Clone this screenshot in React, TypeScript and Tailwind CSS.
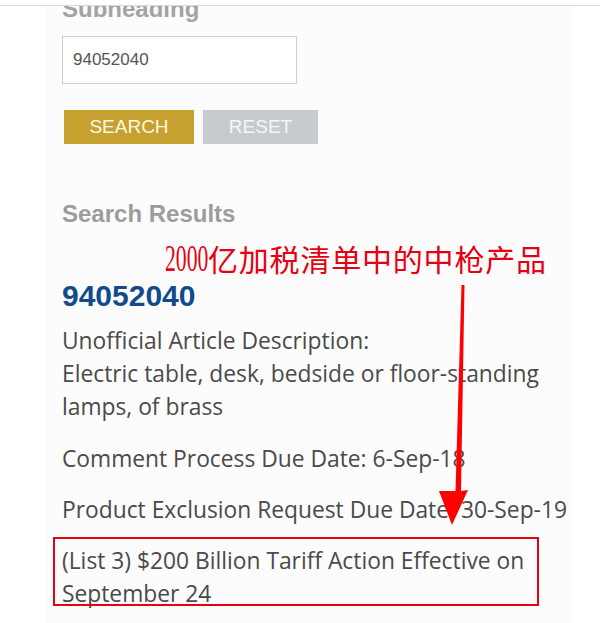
import React from "react";

export default function App() {
  const body = "font-['Open_Sans',sans-serif] text-[22.8px] leading-[33px] text-[#4a4a4a]";
  return (
    <div className="relative w-[600px] h-[623px] overflow-hidden bg-white">
      <div className="h-[6px] border-b border-[#dadada] bg-white" />
      <div className="ml-[46px] w-[528px] h-[617px] overflow-hidden bg-[#fcfcfc] pl-[16px]">
        <h2 className="mt-[-9px] text-[24px] leading-[24px] font-bold text-[#a3a3a3] font-['Liberation_Sans',Arial,sans-serif]">
          Subheading
        </h2>
        <div className="mt-[15px] w-[235px] h-[48px] border border-[#cfcfcf] bg-white flex items-center pl-[10px] font-['Liberation_Sans',Arial,sans-serif] text-[17px] text-[#555]">
          94052040
        </div>
        <div className="mt-[26px] ml-[2px] flex gap-[9px] font-['Liberation_Sans',Arial,sans-serif] text-[19px]">
          <div className="w-[130px] h-[34px] bg-[#c6a130] text-[#fff8e0] flex items-center justify-center">
            SEARCH
          </div>
          <div className="w-[115px] h-[34px] bg-[#c6cbd0] text-[#f4f6f8] flex items-center justify-center">
            RESET
          </div>
        </div>
        <h3 className="mt-[56px] text-[24px] leading-[28px] font-bold text-[#9c9c9c] font-['Liberation_Sans',Arial,sans-serif]">
          Search Results
        </h3>
        <div className="mt-[51px] text-[30px] leading-[34px] font-bold text-[#124b8d] font-['Liberation_Sans',Arial,sans-serif]">
          94052040
        </div>
        <p className={`mt-[11px] w-[490px] ${body}`}>
          Unofficial Article Description:
          <br />
          Electric table, desk, bedside or floor-standing lamps, of brass
        </p>
        <p className={`mt-[19px] ${body}`}>Comment Process Due Date: 6-Sep-18</p>
        <p className={`mt-[18px] whitespace-nowrap ${body}`}>Product Exclusion Request Due Date: 30-Sep-19</p>
        <div className="relative mt-[18px]">
          <p className={`w-[470px] ${body}`}>(List 3) $200 Billion Tariff Action Effective on September 24</p>
          <div className="absolute left-[-9px] top-[-7px] w-[486px] h-[69px] border-2 border-[#e60012]" />
        </div>
      </div>

      <div className="absolute left-[165px] top-[241px] flex items-baseline text-[#e60012] whitespace-nowrap">
        <span className="inline-block origin-left scale-x-[0.57] mr-[-33px] font-['Liberation_Serif',serif] text-[38px] leading-[34px]">
          2000
        </span>
        <span className="font-['Noto_Sans_CJK_SC',sans-serif] text-[30px] leading-[34px] tracking-[0.8px]">
          亿加税清单中的中枪产品
        </span>
      </div>

      <svg className="absolute left-0 top-0 pointer-events-none" width="600" height="623" viewBox="0 0 600 623">
        <polygon
          points="461.5,285 464.5,285 461,491 468,490 452,525 439,491 455.5,491"
          fill="#ff0000"
        />
      </svg>
    </div>
  );
}
